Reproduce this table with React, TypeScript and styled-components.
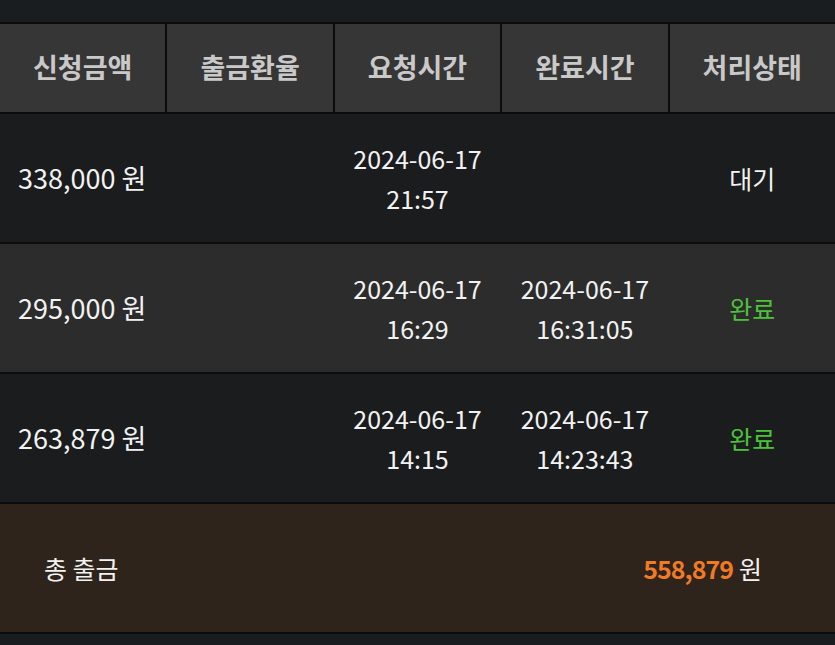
import styled, {createGlobalStyle} from 'styled-components'

const GlobalStyle = createGlobalStyle`
  html, body {
    margin: 0;
    padding: 0;
    background: #0b0c0d;
  }
  body {
    font-family: 'Noto Sans CJK KR', 'Noto Sans', sans-serif;
  }
`

const Page = styled.div`
  display: flex;
  flex-direction: column;
  gap: 2px;
  width: 835px;
  height: 645px;
  overflow: hidden;
  background: #0b0c0d;
`

const TopBand = styled.div`
  height: 22px;
  background: #1a1d20;
`

const HeaderRow = styled.div`
  display: grid;
  grid-template-columns: repeat(5, 1fr);
  column-gap: 2px;
  height: 88px;
`

const HeaderCell = styled.div`
  display: flex;
  align-items: center;
  justify-content: center;
  padding-bottom: 3px;
  background: #363636;
  color: #c9c9c9;
  font-size: 27px;
  font-weight: 700;
`

const Row = styled.div<{$alt?: boolean}>`
  display: grid;
  grid-template-columns: repeat(5, 1fr);
  column-gap: 2px;
  height: 128px;
  background: ${p => (p.$alt ? '#2c2c2c' : '#1b1c1e')};
  color: #f2f2f2;
  font-size: 25px;
`

const Cell = styled.div<{$left?: boolean}>`
  display: flex;
  flex-direction: column;
  align-items: ${p => (p.$left ? 'flex-start' : 'center')};
  justify-content: center;
  padding-left: ${p => (p.$left ? '18px' : '0')};
  font-size: ${p => (p.$left ? '27px' : 'inherit')};
  line-height: 40px;
`

const Status = styled.span<{$done?: boolean}>`
  color: ${p => (p.$done ? '#4cc23a' : '#f2f2f2')};
`

const Footer = styled.div`
  display: flex;
  align-items: center;
  justify-content: space-between;
  height: 128px;
  padding: 0 73px 0 44px;
  background: #2e241c;
  color: #f2f2f2;
  font-size: 25px;
`

const TotalAmount = styled.div`
  display: flex;
  align-items: baseline;
  gap: 6px;
`

const Orange = styled.span`
  color: #f07a26;
  font-weight: 700;
  letter-spacing: -1px;
`

const BottomBand = styled.div`
  flex: 1;
  background: #1a1d20;
`

type Item = {
  amount: string
  reqDate: string
  reqTime: string
  doneDate?: string
  doneTime?: string
  status: string
}

const items: Item[] = [
  {amount: '338,000 원', reqDate: '2024-06-17', reqTime: '21:57', status: '대기'},
  {amount: '295,000 원', reqDate: '2024-06-17', reqTime: '16:29', doneDate: '2024-06-17', doneTime: '16:31:05', status: '완료'},
  {amount: '263,879 원', reqDate: '2024-06-17', reqTime: '14:15', doneDate: '2024-06-17', doneTime: '14:23:43', status: '완료'},
]

const headers = ['신청금액', '출금환율', '요청시간', '완료시간', '처리상태']

export default function App() {
  return (
    <>
      <GlobalStyle />
      <Page>
        <TopBand />
        <HeaderRow>
          {headers.map(h => (
            <HeaderCell key={h}>{h}</HeaderCell>
          ))}
        </HeaderRow>
        {items.map((it, i) => (
          <Row key={i} $alt={i % 2 === 1}>
            <Cell $left>{it.amount}</Cell>
            <Cell />
            <Cell>
              <span>{it.reqDate}</span>
              <span>{it.reqTime}</span>
            </Cell>
            <Cell>
              {it.doneDate && <span>{it.doneDate}</span>}
              {it.doneTime && <span>{it.doneTime}</span>}
            </Cell>
            <Cell>
              <Status $done={it.status === '완료'}>{it.status}</Status>
            </Cell>
          </Row>
        ))}
        <Footer>
          <span>총 출금</span>
          <TotalAmount>
            <Orange>558,879</Orange>
            <span>원</span>
          </TotalAmount>
        </Footer>
        <BottomBand />
      </Page>
    </>
  )
}
